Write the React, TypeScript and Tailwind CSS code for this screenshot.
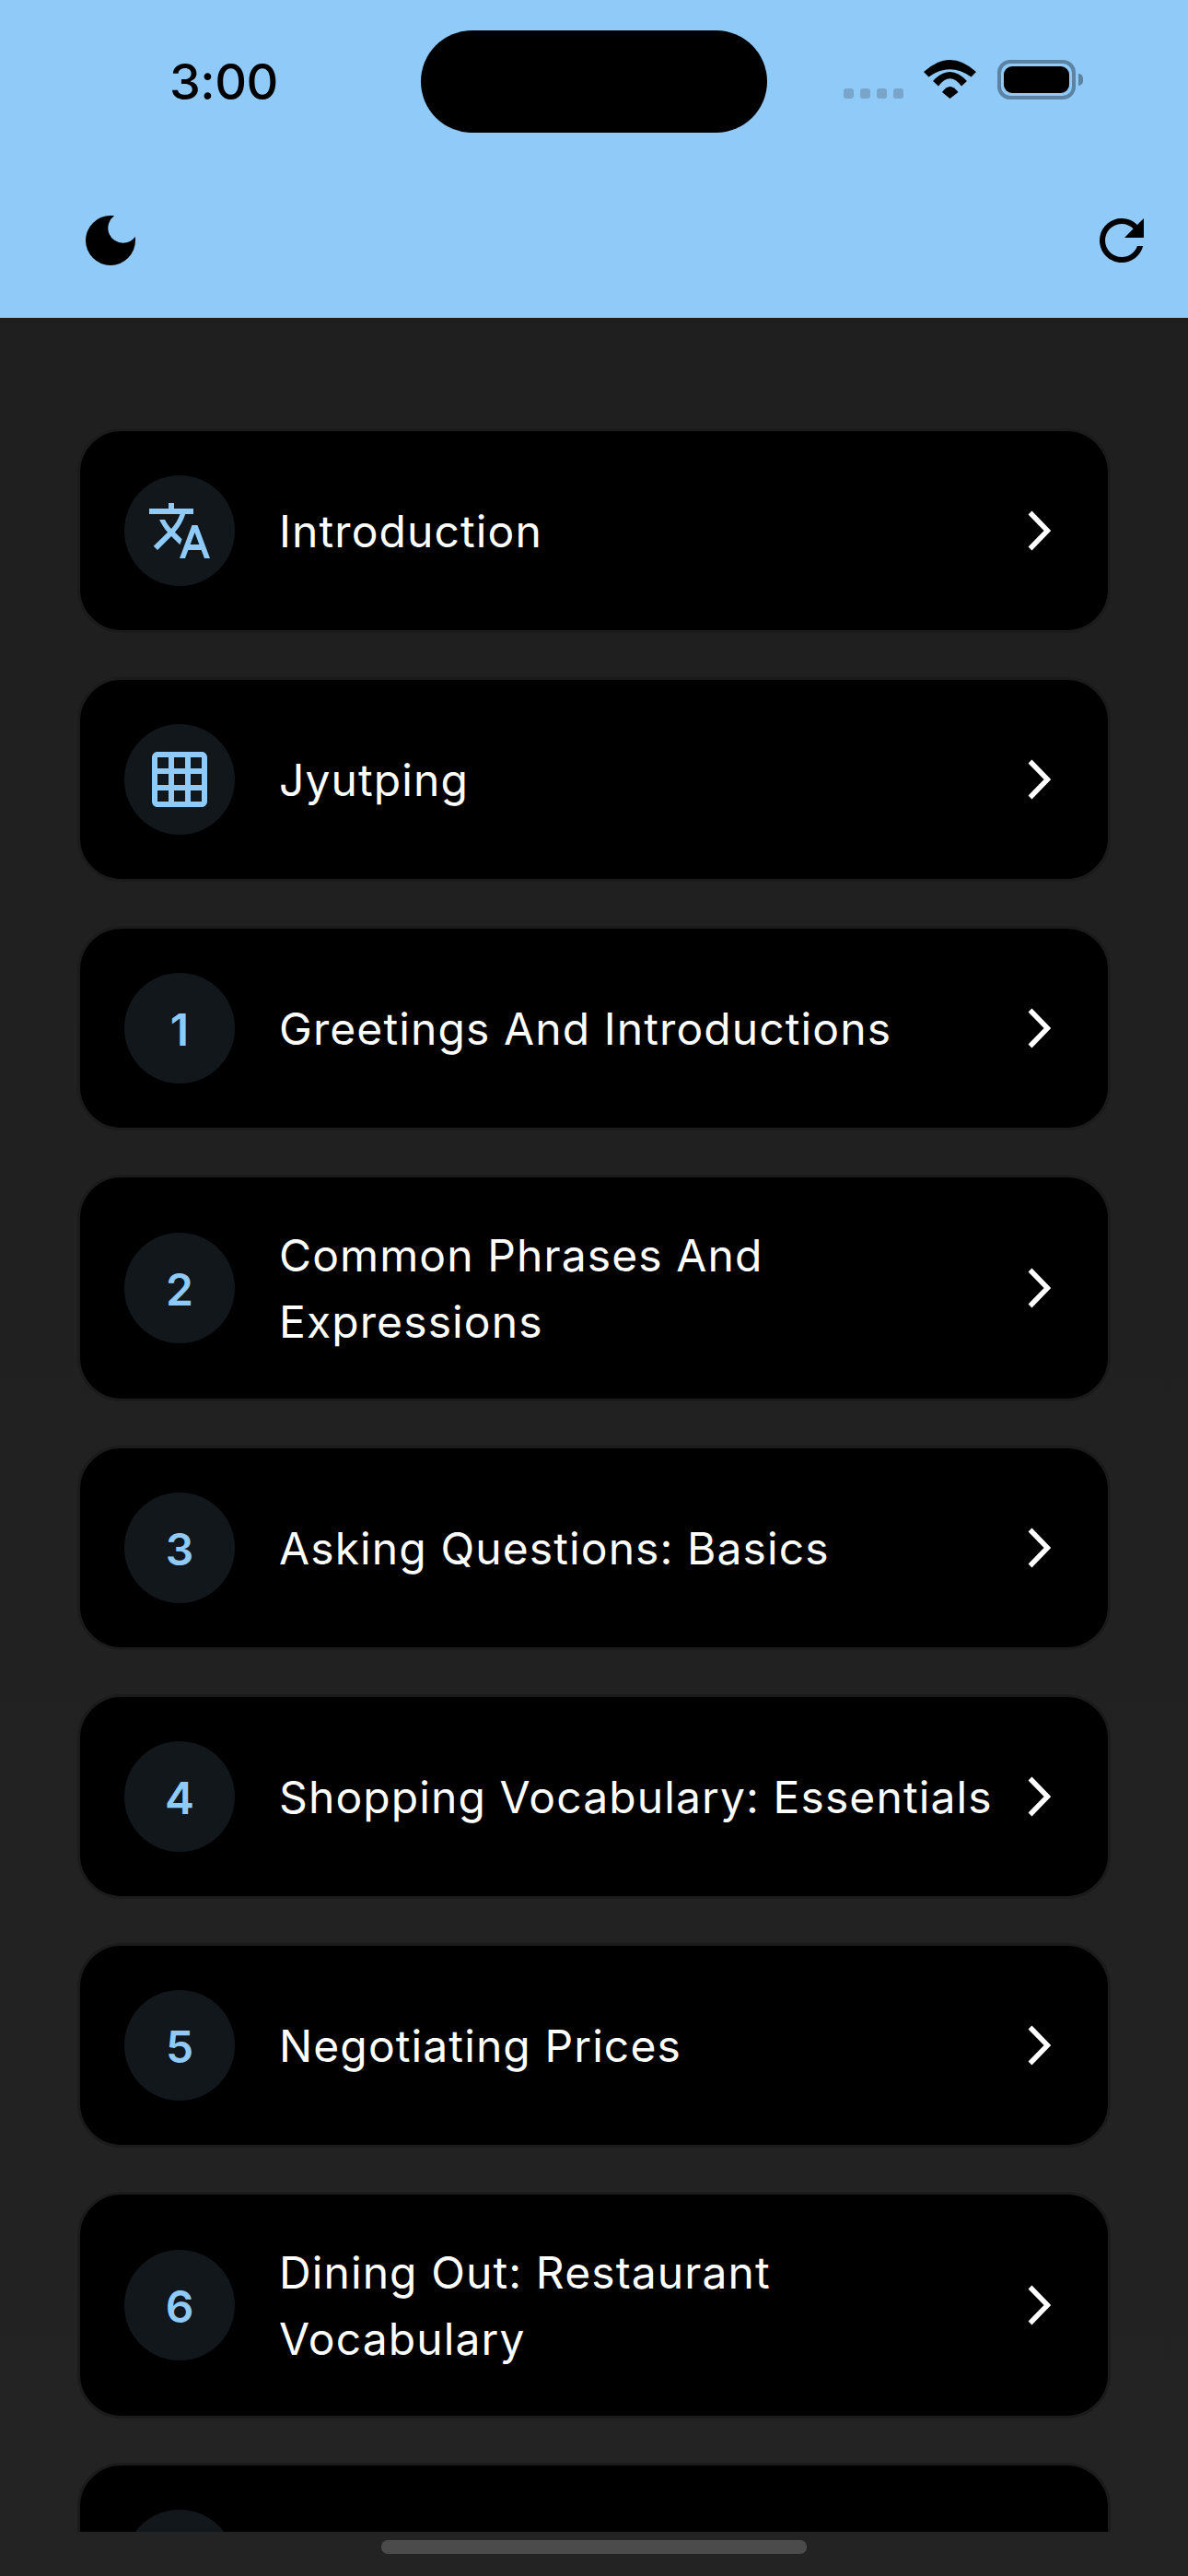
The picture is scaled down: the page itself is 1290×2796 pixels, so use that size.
import React from 'react';
import { MdDarkMode, MdRefresh, MdTranslate, MdGridOn } from 'react-icons/md';

const LESSONS: { id: string; badge?: React.ReactNode; title?: string }[] = [
  { id: 'intro', badge: <MdTranslate className="w-[72px] h-[72px]" />, title: 'Introduction' },
  { id: 'jyutping', badge: <MdGridOn className="w-[72px] h-[72px]" />, title: 'Jyutping' },
  { id: '1', badge: <span className="translate-y-[2px]">1</span>, title: 'Greetings And Introductions' },
  { id: '2', badge: <span className="translate-y-[2px]">2</span>, title: 'Common Phrases And Expressions' },
  { id: '3', badge: <span className="translate-y-[2px]">3</span>, title: 'Asking Questions: Basics' },
  { id: '4', badge: <span className="translate-y-[2px]">4</span>, title: 'Shopping Vocabulary: Essentials' },
  { id: '5', badge: <span className="translate-y-[2px]">5</span>, title: 'Negotiating Prices' },
  { id: '6', badge: <span className="translate-y-[2px]">6</span>, title: 'Dining Out: Restaurant Vocabulary' },
  // next lesson is scrolled off, only the top of its card shows
  { id: 'next' },
];

const Wifi = () => (
  <svg width="57" height="42" viewBox="0 0 57 42" fill="currentColor" className="text-black">
    <path d="M0 13 Q28.5 -13 57 13 L51.5 18.5 Q28.5 2 5.5 18.5 Z" />
    <path d="M10 23 Q28.5 3 47 23 L41 28.5 Q28.5 12 16 28.5 Z" />
    <path d="M20 35 Q28.5 23 37.5 35 L28.5 42 Z" />
  </svg>
);

const Battery = () => (
  <div className="flex items-center">
    <div className="w-[85px] h-[43px] border-4 border-[#5c82a4] rounded-[14px] p-[3px]">
      <div className="w-full h-full bg-black rounded-[9px]" />
    </div>
    <div className="ml-[3px] w-[5px] h-[13px] bg-[#5c82a4] rounded-r-full" />
  </div>
);

const StatusBar = () => (
  <div className="flex items-start pt-[33px] pl-[184px]">
    <div className="w-[273px] h-[111px] flex items-center text-[54px] leading-none font-medium tracking-[-0.5px] text-black">3:00</div>
    <div className="w-[376px] h-[111px] bg-black rounded-full" />
    <div className="ml-[83px] mt-[32px] flex items-end">
      <div className="flex gap-[7px] mb-[1px]">
        <span className="w-[11px] h-[11px] rounded-[3px] bg-[#78a5c9]" />
        <span className="w-[11px] h-[11px] rounded-[3px] bg-[#78a5c9]" />
        <span className="w-[11px] h-[11px] rounded-[3px] bg-[#78a5c9]" />
        <span className="w-[11px] h-[11px] rounded-[3px] bg-[#78a5c9]" />
      </div>
      <div className="ml-[22px] mb-[1px]">
        <Wifi />
      </div>
      <div className="ml-[23px]">
        <Battery />
      </div>
    </div>
  </div>
);

const Chevron = () => (
  <svg width="26" height="44" viewBox="0 0 26 44" fill="none" stroke="white" strokeWidth="5.5" className="shrink-0">
    <path d="M3.5 2.5 L22.5 22 L3.5 41.5" />
  </svg>
);

const App: React.FC = () => {
  return (
    <div className="w-[1290px] h-[2796px] flex flex-col overflow-hidden bg-linear-to-b from-[#1e1e1e] to-[#232323] font-['Inter',sans-serif]">
      {/* App bar */}
      <header className="h-[345px] shrink-0 bg-[#90caf9]">
        <StatusBar />
        <div className="mt-[81px] pl-[84px] pr-[36px] flex justify-between text-black">
          <MdDarkMode className="w-[72px] h-[72px]" />
          <MdRefresh className="w-[72px] h-[72px]" />
        </div>
      </header>

      {/* Lesson list, cut off by the scroll area */}
      <main className="h-[2403px] shrink-0 overflow-hidden px-[84px] pt-[120px] flex flex-col gap-12">
        {LESSONS.map((lesson) => (
          <div key={lesson.id} className="shrink-0 flex items-center p-12 bg-black border-[3px] border-[#1b1b1b] rounded-[48px]">
            <div className="w-[120px] h-[120px] shrink-0 rounded-full bg-[#11171b] flex items-center justify-center text-[#90caf9] text-[48px] font-semibold">
              {lesson.badge}
            </div>
            <div className="ml-12 w-[792px] shrink-0 translate-y-[1px] text-white text-[48px] leading-[72px] tracking-[1.1px]">{lesson.title}</div>
            <div className="flex-1 flex justify-end pr-[14px]">
              <Chevron />
            </div>
          </div>
        ))}
      </main>

      {/* Home indicator */}
      <div className="mt-[9px] mx-auto w-[462px] h-[15px] rounded-[7px] bg-[#4b4b4b]" />
    </div>
  );
};

export default App;
